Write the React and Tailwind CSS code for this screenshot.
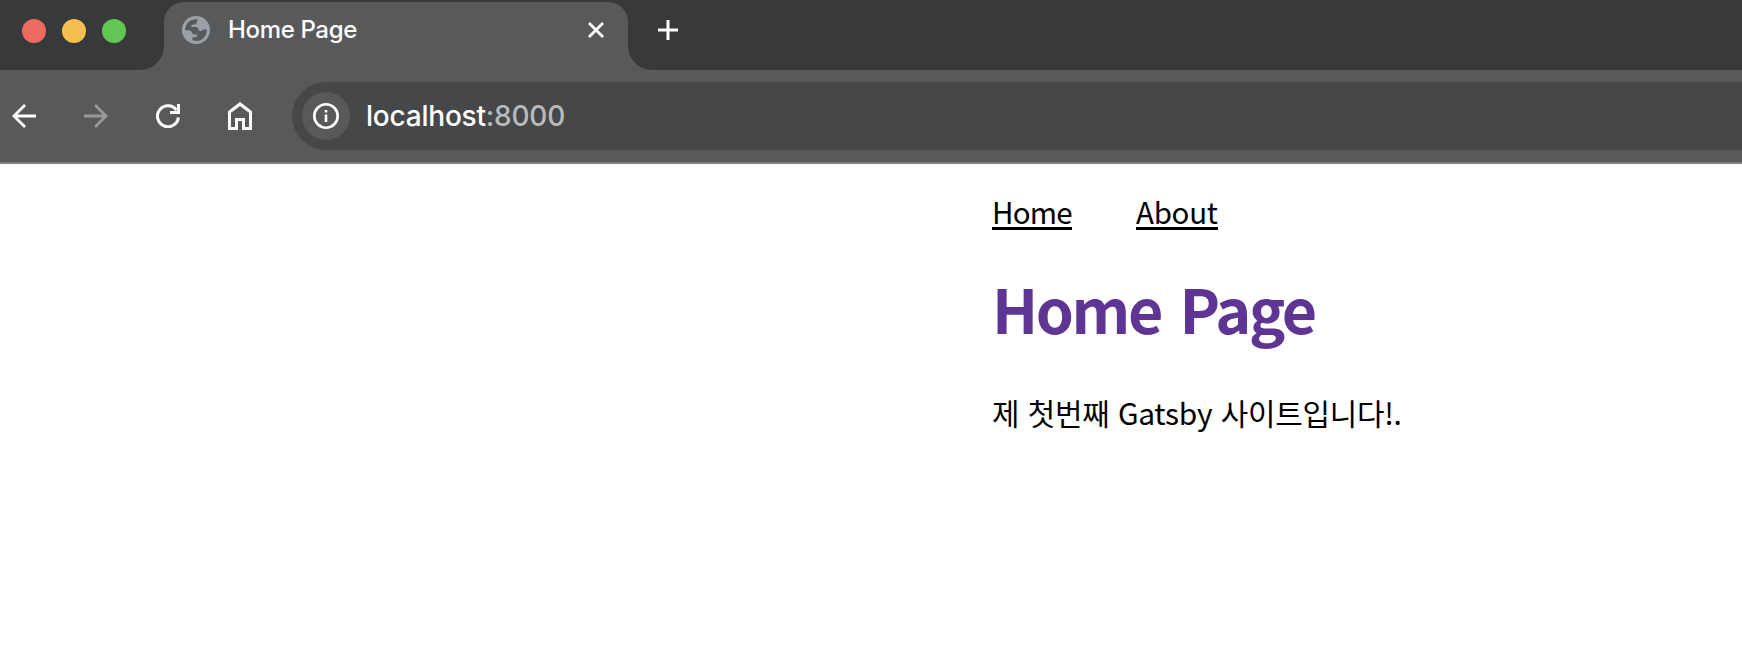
const SANS = "font-['Inter','Liberation_Sans',sans-serif]";
const PAGE = "font-['Noto_Sans_CJK_KR','Noto_Sans',sans-serif]";

function Globe() {
  return (
    <svg className="size-7 shrink-0" viewBox="0 0 28 28">
      <circle cx="14" cy="14" r="14" fill="#9aa0a6" />
      <path d="M3.200 14.200C3.200 8 7.500 3.400 13.500 3.200L16.500 3.500C15 4.300 14.800 5 14.800 6.500C14.500 8.200 13 8.600 10.500 8.800C9.200 9.200 9 10 9.500 11H13.500C15.800 11 16.600 12.300 16.800 14.800C18.500 15.500 20 15 20.800 13.800C22 13.300 23 13.400 24.800 13.400C25.200 19.500 20.500 24.800 14.500 24.900L10.500 24.300V21.200H13.500C15 21.200 15.500 20.200 15.200 18.500H12C10.500 18.300 10 17.300 9.700 15.800C8.800 14.400 7 14.200 3.200 14.200Z" fill="#58595b" />
    </svg>
  );
}

function TabStrip() {
  return (
    <div className="flex h-[70px] bg-[#58595b]">
      <div className="flex w-[164px] shrink-0 gap-4 rounded-br-[24px] bg-[#38393b] pl-[22px] pt-[19px]">
        <span className="size-6 rounded-full bg-[#ed6a5f]" />
        <span className="size-6 rounded-full bg-[#f5bf4f]" />
        <span className="size-6 rounded-full bg-[#62c655]" />
      </div>
      <div className="w-[464px] shrink-0 bg-[#38393b] pt-[2px]">
        <div className="flex h-[68px] items-start rounded-t-[20px] bg-[#58595b] pl-[18px] pt-[14px]">
          <Globe />
          <span className="ml-[18px] w-[360px] whitespace-nowrap text-[24px] font-[450] leading-[28px] tracking-[-0.350px] text-white">Home Page</span>
          <svg className="mt-[6px] size-4 shrink-0" viewBox="0 0 16 16" fill="none" stroke="white" strokeWidth="2.8">
            <path d="M1 1l14 14M15 1L1 15" />
          </svg>
        </div>
      </div>
      <div className="flex-1 rounded-bl-[24px] bg-[#38393b] pl-[30px] pt-5">
        <svg className="size-5" viewBox="0 0 20 20" fill="none" stroke="white" strokeWidth="3">
          <path d="M0 10h20M10 0v20" />
        </svg>
      </div>
    </div>
  );
}

function Toolbar() {
  return (
    <div className="flex h-[94px] items-start border-b-2 border-[#7e7f81] bg-[#58595b] pl-3 pt-3">
      <div className="flex h-[68px] w-[280px] shrink-0 items-center gap-12">
        <svg className="size-6 shrink-0" viewBox="0 0 24 24" fill="none" stroke="white" strokeWidth="2.8">
          <path d="M24 12H2M13 1L2 12l11 11" />
        </svg>
        <svg className="size-6 shrink-0" viewBox="0 0 24 24" fill="none" stroke="#98999b" strokeWidth="2.8">
          <path d="M0 12h22M11 1l11 11-11 11" />
        </svg>
        <svg className="size-6 shrink-0" viewBox="0 0 24 24" fill="none" stroke="white" strokeWidth="3">
          <path d="M22.400 13.500A10.500 10.500 0 1 1 20.500 6M22.500 0V8.500H14" />
        </svg>
        <svg className="h-7 w-6 shrink-0" viewBox="0 0 24 28" fill="none" stroke="white" strokeWidth="3">
          <path d="M1.500 10L12 2l10.500 8v16.500H15.500V17.500h-7v9h-7z" />
        </svg>
      </div>
      <div className="flex h-[68px] flex-1 items-center rounded-l-full bg-[#464749] pl-[10px]">
        <div className="flex size-12 shrink-0 items-center justify-center rounded-full bg-[#58595b]">
          <svg className="size-[26px]" viewBox="0 0 26 26" fill="none" stroke="white" strokeWidth="2.6">
            <circle cx="13" cy="13" r="11.7" />
            <path d="M13 11.500V19M13 7v2.600" />
          </svg>
        </div>
        <div className="ml-4 whitespace-nowrap text-[28px] font-[450] leading-[34px] tracking-[-0.220px] text-white">
          localhost<span className="text-[#b9babb]">:8000</span>
        </div>
      </div>
    </div>
  );
}

export default function App() {
  return (
    <div className={`h-[656px] w-full overflow-hidden bg-white ${SANS}`}>
      <TabStrip />
      <Toolbar />
      <main className={`pl-[992px] pt-[31px] text-black ${PAGE}`}>
        <nav className="flex gap-16 text-[29.500px] leading-[32px]">
          <a className="h-[35px] w-20 whitespace-nowrap border-b-3 border-black tracking-[-0.800px]">Home</a>
          <a className="h-[35px] w-[82px] whitespace-nowrap border-b-3 border-black tracking-[-0.300px]">About</a>
        </nav>
        <h1 className="mt-[38px] whitespace-nowrap text-[61px] font-bold leading-[80px] tracking-[-2.400px] [word-spacing:7px] text-[#5f3594]">Home Page</h1>
        <p className="mt-[44px] whitespace-nowrap text-[29.900px] leading-[40px] tracking-[-0.250px] [word-spacing:2px]">제 첫번째 Gatsby 사이트입니다!.</p>
      </main>
    </div>
  );
}
